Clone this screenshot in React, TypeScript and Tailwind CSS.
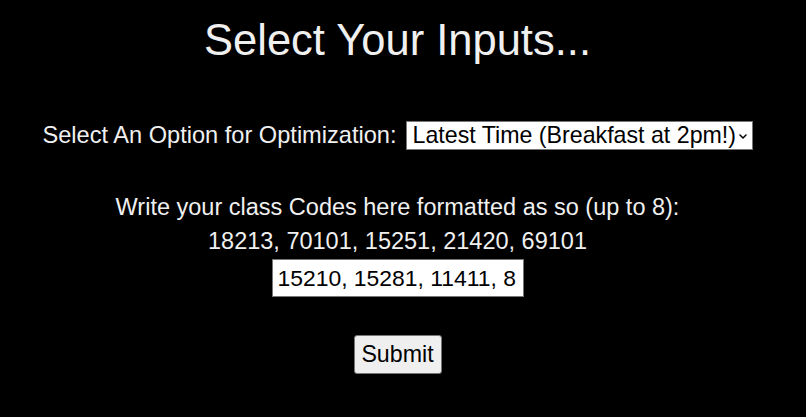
import React from "react";

const font = { fontFamily: '"Liberation Sans", Arial, Helvetica, sans-serif' };

export default function App() {
  return (
    <div className="w-[806px] h-[417px] bg-black" style={font}>
      <div className="w-[795px] text-[#f0f0f0] flex flex-col items-center pt-[15px]">
        <h1 className="text-[43.5px] leading-[50px] font-normal m-0">Select Your Inputs...</h1>

        <div className="mt-[55px] flex items-center h-[30px] text-[23.6px] leading-[27px]">
          <label className="mr-[9px] whitespace-nowrap">Select An Option for Optimization:</label>
          <div className="relative w-[347px] h-[29px] bg-white border border-[#767676] text-black flex items-center text-[23.2px]">
            <span className="pl-[6px] leading-[26px] whitespace-nowrap">Latest Time (Breakfast at 2pm!)</span>
            <svg
              className="absolute right-[5px] top-[12px]"
              width="8"
              height="5"
              viewBox="0 0 8 5"
              fill="none"
            >
              <path d="M1 1 L4 4 L7 1" stroke="#000" strokeWidth="1.5" strokeLinecap="round" strokeLinejoin="round" />
            </svg>
          </div>
        </div>

        <div className="mt-[40px] text-[23.5px] leading-[34px] text-center whitespace-nowrap">
          <div>Write your class Codes here formatted as so (up to 8):</div>
          <div>18213, 70101, 15251, 21420, 69101</div>
        </div>

        <input
          type="text"
          readOnly
          value="15210, 15281, 11411, 8"
          className="mt-[1px] w-[252px] h-[38px] bg-white text-black text-[22.9px] px-[5px] border border-[#767676] outline-none"
          style={font}
        />

        <button
          className="mt-[38px] w-[88px] h-[39px] bg-[#efefef] text-black text-[23.2px] border border-[#767676] rounded-[3px]"
          style={font}
        >
          Submit
        </button>
      </div>
    </div>
  );
}
